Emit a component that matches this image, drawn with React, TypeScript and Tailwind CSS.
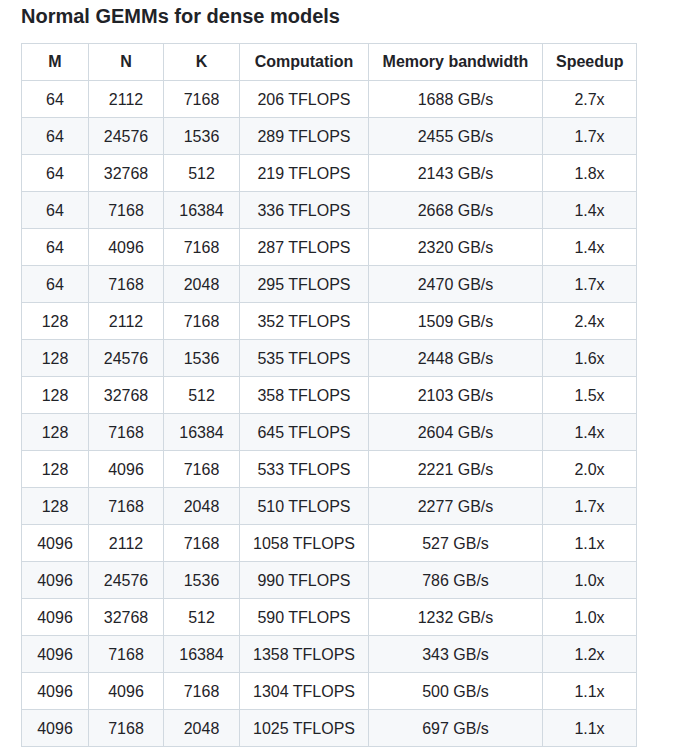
const rows: [number, number, number, string, string, string][] = [
  [64, 2112, 7168, "206 TFLOPS", "1688 GB/s", "2.7x"],
  [64, 24576, 1536, "289 TFLOPS", "2455 GB/s", "1.7x"],
  [64, 32768, 512, "219 TFLOPS", "2143 GB/s", "1.8x"],
  [64, 7168, 16384, "336 TFLOPS", "2668 GB/s", "1.4x"],
  [64, 4096, 7168, "287 TFLOPS", "2320 GB/s", "1.4x"],
  [64, 7168, 2048, "295 TFLOPS", "2470 GB/s", "1.7x"],
  [128, 2112, 7168, "352 TFLOPS", "1509 GB/s", "2.4x"],
  [128, 24576, 1536, "535 TFLOPS", "2448 GB/s", "1.6x"],
  [128, 32768, 512, "358 TFLOPS", "2103 GB/s", "1.5x"],
  [128, 7168, 16384, "645 TFLOPS", "2604 GB/s", "1.4x"],
  [128, 4096, 7168, "533 TFLOPS", "2221 GB/s", "2.0x"],
  [128, 7168, 2048, "510 TFLOPS", "2277 GB/s", "1.7x"],
  [4096, 2112, 7168, "1058 TFLOPS", "527 GB/s", "1.1x"],
  [4096, 24576, 1536, "990 TFLOPS", "786 GB/s", "1.0x"],
  [4096, 32768, 512, "590 TFLOPS", "1232 GB/s", "1.0x"],
  [4096, 7168, 16384, "1358 TFLOPS", "343 GB/s", "1.2x"],
  [4096, 4096, 7168, "1304 TFLOPS", "500 GB/s", "1.1x"],
  [4096, 7168, 2048, "1025 TFLOPS", "697 GB/s", "1.1x"],
];

const headers = ["M", "N", "K", "Computation", "Memory bandwidth", "Speedup"];
const widths = ["w-[67px]", "w-[75px]", "w-[76px]", "w-[129px]", "w-[174px]", "w-[94px]"];

export default function App() {
  return (
    <div className="min-h-screen bg-white pl-[21px] pt-[4px] text-[#1f2328] font-['Liberation_Sans',Helvetica,Arial,sans-serif]">
      <h3 className="text-[20px] leading-[25px] font-semibold mb-[14px]">Normal GEMMs for dense models</h3>

      <table className="table-fixed border-collapse w-[615px] text-[16px] leading-6">
        <colgroup>
          {widths.map((w, i) => (
            <col key={i} className={w} />
          ))}
        </colgroup>
        <thead>
          <tr className="bg-white">
            {headers.map(h => (
              <th key={h} className="border border-[#d1d9e0] px-[13px] py-[6px] text-center font-semibold whitespace-nowrap">
                {h}
              </th>
            ))}
          </tr>
        </thead>
        <tbody>
          {rows.map((r, i) => (
            <tr key={i} className={i % 2 === 1 ? "bg-[#f6f8fa]" : "bg-white"}>
              {r.map((c, j) => (
                <td key={j} className="border border-[#d1d9e0] px-[13px] pt-[7px] pb-[5px] text-center whitespace-nowrap">
                  {c}
                </td>
              ))}
            </tr>
          ))}
        </tbody>
      </table>
    </div>
  );
}
